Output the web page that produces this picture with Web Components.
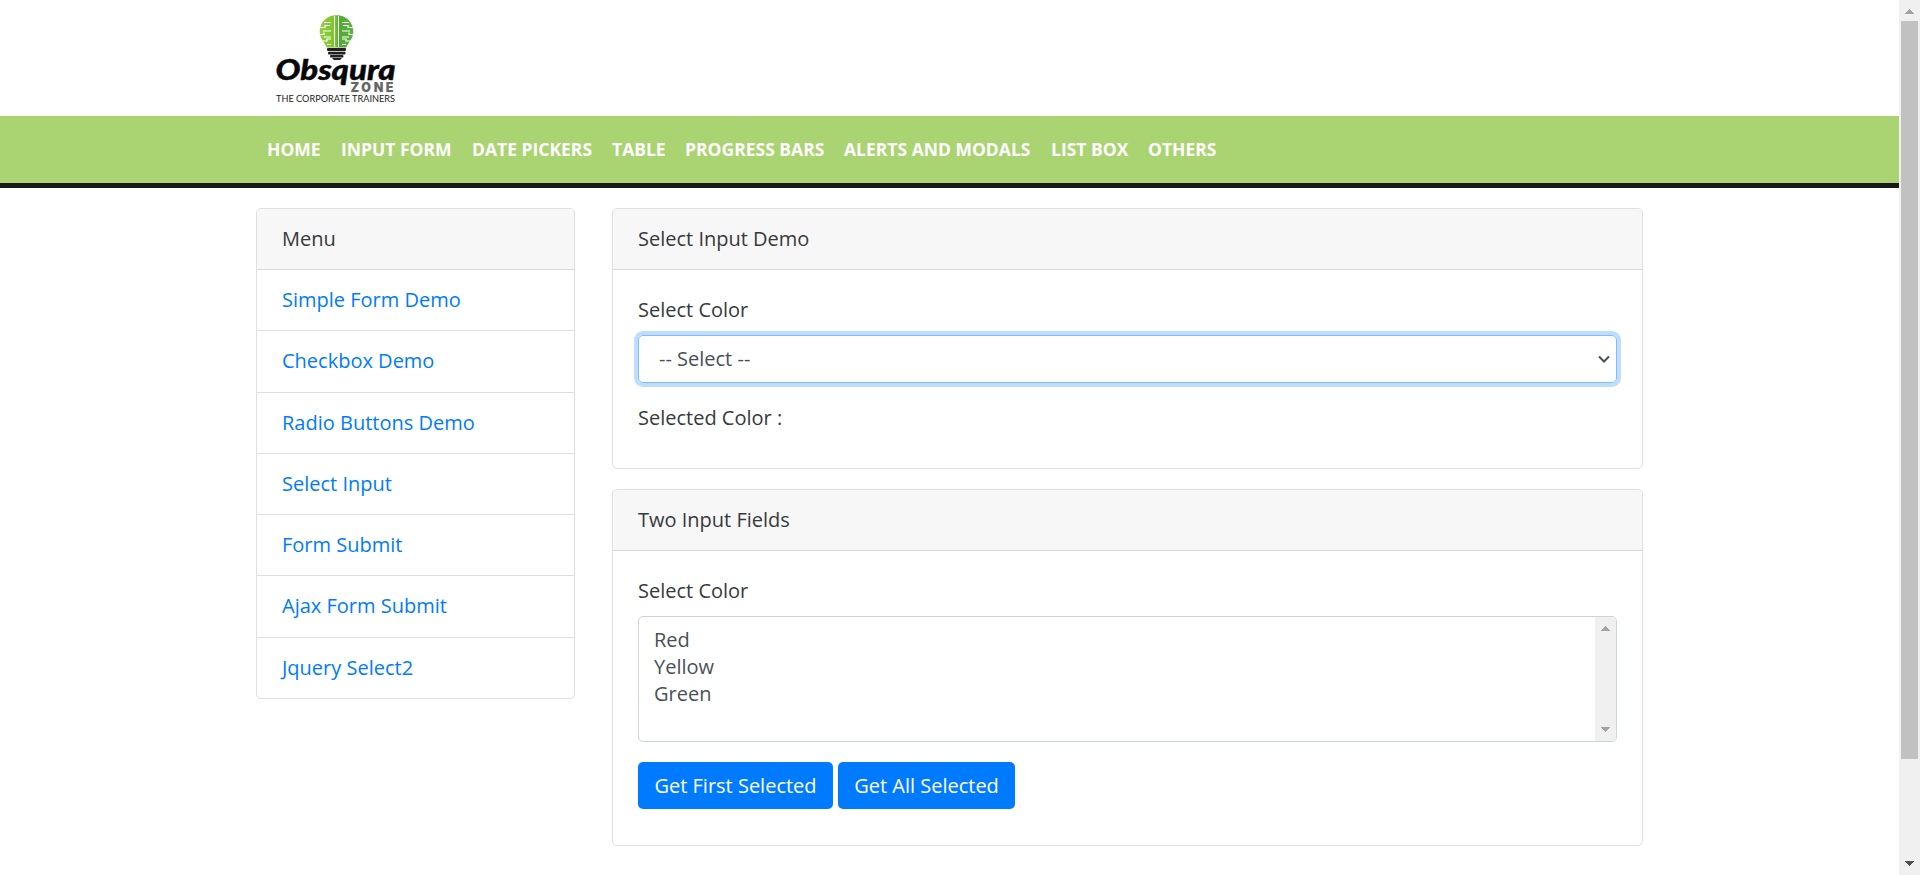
<!DOCTYPE html>
<html lang="en">
<head>
<meta charset="utf-8">
<title>Obsqura Zone</title>
<style>
html,body{margin:0;height:100%;overflow:hidden;background:#fff}
body{font-family:"Open Sans",sans-serif;font-size:20px;line-height:30px;color:#373a3c}
</style>
</head>
<body>
<oz-window>
  <oz-header></oz-header>
  <oz-nav>
    <oz-nav-item style="--w:74px">HOME</oz-nav-item>
    <oz-nav-item style="--w:131px">INPUT FORM</oz-nav-item>
    <oz-nav-item style="--w:140px">DATE PICKERS</oz-nav-item>
    <oz-nav-item style="--w:73px">TABLE</oz-nav-item>
    <oz-nav-item style="--w:159px">PROGRESS BARS</oz-nav-item>
    <oz-nav-item style="--w:207px">ALERTS AND MODALS</oz-nav-item>
    <oz-nav-item style="--w:97px">LIST BOX</oz-nav-item>
    <oz-nav-item style="--w:89px">OTHERS</oz-nav-item>
  </oz-nav>
  <oz-columns>
    <oz-card slot="side" class="menu">
      <span slot="title">Menu</span>
      <oz-menu>
        <oz-link>Simple Form Demo</oz-link>
        <oz-link>Checkbox Demo</oz-link>
        <oz-link>Radio Buttons Demo</oz-link>
        <oz-link>Select Input</oz-link>
        <oz-link>Form Submit</oz-link>
        <oz-link>Ajax Form Submit</oz-link>
        <oz-link>Jquery Select2</oz-link>
      </oz-menu>
    </oz-card>
    <oz-card style="height:261px">
      <span slot="title">Select Input Demo</span>
      <oz-form>
        <oz-label>Select Color</oz-label>
        <oz-select>-- Select --</oz-select>
        <oz-label>Selected Color :</oz-label>
      </oz-form>
    </oz-card>
    <oz-card style="height:357px">
      <span slot="title">Two Input Fields</span>
      <oz-form>
        <oz-label>Select Color</oz-label>
        <oz-listbox><div>Red</div><div>Yellow</div><div>Green</div></oz-listbox>
        <oz-buttons>
          <oz-button style="width:195px">Get First Selected</oz-button>
          <oz-button style="width:177px">Get All Selected</oz-button>
        </oz-buttons>
      </oz-form>
    </oz-card>
  </oz-columns>
</oz-window>
<script>
const define = (name, html) => customElements.define(name, class extends HTMLElement {
  constructor() {
    super();
    this.attachShadow({ mode: 'open' }).innerHTML = html;
  }
});

define('oz-window', `<style>
:host{display:flex;height:875px;overflow:hidden}
main{flex:1;min-width:0}
</style><main><slot></slot></main><oz-scrollbar style="--thumb:738px;--down:#505050"></oz-scrollbar>`);

define('oz-scrollbar', `<style>
:host{display:flex;flex-direction:column;width:21px;background:#f0f0f0;box-sizing:border-box;flex:none}
svg{display:block;flex:none}
i{display:block;height:var(--thumb,0);width:17px;margin:0 auto 0 2px;background:#c1c1c1}
b{flex:1}
</style>
<svg width="21" height="21" shape-rendering="crispEdges"><path fill="#a3a3a3" d="M10 9h1v1h1v1h1v1h1v1h1v1H6v-1h1v-1h1v-1h1v-1h1z"/></svg>
<i></i><b></b>
<svg width="21" height="21" shape-rendering="crispEdges"><path fill="var(--down,#a3a3a3)" d="M6 7h9v1h-1v1h-1v1h-1v1h-1v1h-1v-1H9v-1H8V9H7V8H6z"/></svg>`);

define('oz-header', `<style>
:host{display:block;height:116px;padding-left:268px}
svg{display:block}
</style>
<svg width="140" height="116" viewBox="268 0 140 116">
<defs><linearGradient id="g"><stop offset="0" stop-color="#91cf3c"/><stop offset=".48" stop-color="#7ac52f"/><stop offset=".55" stop-color="#4fa934"/><stop offset="1" stop-color="#5fb53a"/></linearGradient></defs>
<path fill="url(#g)" d="M336.500 15.200c-10 0-16.800 7.300-16.800 16.200 0 7.300 4.500 9.800 7 16h19.600c2.500-6.200 7-8.700 7-16 0-8.900-6.800-16.200-16.800-16.200z"/>
<g fill="none" stroke="#fff" stroke-width="1.200">
<path d="M334.500 16v31M338.500 16v31" stroke-width="1"/>
<path d="M324 22.500h7M319 27.500h6v-2h5M323 31h8M319 34.500h5v-2M324 37h7M322 41h5v-2h4M327 44.500h4"/>
<path d="M349 22.500h-7M354 27.500h-6v-2h-5M350 31h-8M354 34.500h-5v-2M349 37h-7M351 41h-5v-2h-4M346 44.500h-4"/>
</g>
<g fill="#202020"><rect x="327" y="48" width="19" height="3" rx="1"/><rect x="328" y="51.700" width="17.500" height="2.800" rx="1"/><rect x="330" y="55" width="13.500" height="2.500" rx="1"/><path d="M332 58h10l-2 2h-6z"/></g>
<text x="275.500" y="79.500" textLength="120" lengthAdjust="spacingAndGlyphs" font-family="Lato,sans-serif" font-weight="900" font-style="italic" font-size="27.500" fill="#080808" stroke="#080808" stroke-width=".4">Obsqura</text>
<text x="350.500" y="92" textLength="43" font-family="Inter,sans-serif" font-weight="900" font-size="12.500" fill="#666">ZONE</text>
<text x="276" y="101.700" textLength="119" lengthAdjust="spacingAndGlyphs" font-family="Lato,sans-serif" font-size="9" fill="#222">THE CORPORATE TRAINERS</text>
</svg>`);

define('oz-nav', `<style>
:host{display:flex;align-items:center;box-sizing:border-box;height:72px;padding:0 0 2px 256px;background:#a9d471;border-bottom:5px solid #17181c}
</style><slot></slot>`);

define('oz-nav-item', `<style>
:host{display:block;box-sizing:border-box;width:var(--w);padding-left:11px;color:#fff;font-weight:700;font-size:17.500px;line-height:26px;white-space:nowrap}
</style><slot></slot>`);

define('oz-columns', `<style>
:host{display:grid;grid-template-columns:319px 1031px;column-gap:37px;padding:20px 0 0 256px;align-items:start}
section{display:grid;row-gap:20px}
</style><slot name="side"></slot><section><slot></slot></section>`);

define('oz-card', `<style>
:host{display:block;box-sizing:border-box;border:1px solid #dfdfdf;border-radius:5px;overflow:hidden;background:#fff}
header{box-sizing:border-box;height:61px;padding:15px 25px;background:#f7f7f7;border-bottom:1px solid #dadada}
</style><header><slot name="title"></slot></header><slot></slot>`);

define('oz-menu', `<style>
:host{display:grid;grid-template-rows:61px 62px 61px 61px 61px 62px 60px}
</style><slot></slot>`);

define('oz-link', `<style>
:host{display:block;padding:15px 25px;border-bottom:1px solid #dfdfdf;color:#007bff}
:host(:last-child){border-bottom:0}
</style><slot></slot>`);

define('oz-form', `<style>
:host{display:block;padding:25px}
</style><slot></slot>`);

define('oz-label', `<style>
:host{display:block;margin-bottom:10px}
</style><slot></slot>`);

define('oz-select', `<style>
:host{display:flex;align-items:center;justify-content:space-between;box-sizing:border-box;height:48px;margin-bottom:20px;padding:0 6px 0 20px;border:1px solid #80bdff;border-radius:5px;box-shadow:0 0 0 4px #bfdeff;color:#495057}
</style><slot></slot><svg width="12" height="8" viewBox="0 0 12 8"><path d="M1 1.500l5 5 5-5" fill="none" stroke="#495057" stroke-width="2"/></svg>`);

define('oz-listbox', `<style>
:host{display:flex;box-sizing:border-box;height:126px;margin-bottom:20px;border:1px solid #ced4da;border-radius:5px;overflow:hidden;color:#495057;line-height:27px}
div{flex:1;padding:9px 15px}
</style><div><slot></slot></div><oz-scrollbar></oz-scrollbar>`);

define('oz-buttons', `<style>
:host{display:flex;gap:5px}
</style><slot></slot>`);

define('oz-button', `<style>
:host{display:block;box-sizing:border-box;height:47px;border-radius:5px;background:#007bff;color:#fff;text-align:center;line-height:47px;white-space:nowrap}
</style><slot></slot>`);
</script>
</body>
</html>
